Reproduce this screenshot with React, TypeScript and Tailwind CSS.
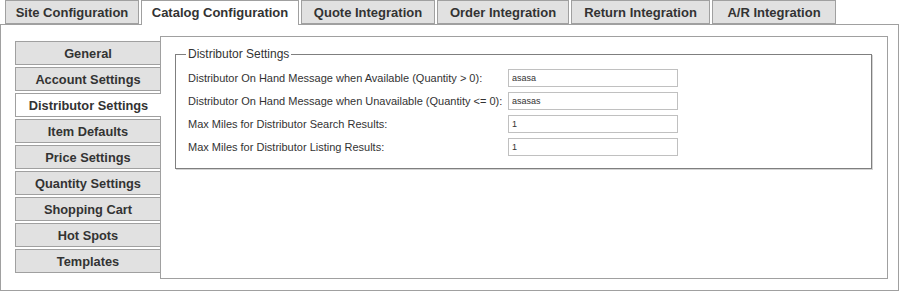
const tabs = [
    { label: 'Site Configuration', w: 'w-[134px]' },
    { label: 'Catalog Configuration', w: 'w-[158px]', active: true },
    { label: 'Quote Integration', w: 'w-[134px]' },
    { label: 'Order Integration', w: 'w-[132px]' },
    { label: 'Return Integration', w: 'w-[139px]' },
    { label: 'A/R Integration', w: 'w-[124px]' },
];

const navItems = [
    'General',
    'Account Settings',
    'Distributor Settings',
    'Item Defaults',
    'Price Settings',
    'Quantity Settings',
    'Shopping Cart',
    'Hot Spots',
    'Templates',
];

const fields = [
    { label: 'Distributor On Hand Message when Available (Quantity > 0):', value: 'asasa' },
    { label: 'Distributor On Hand Message when Unavailable (Quantity <= 0):', value: 'asasas' },
    { label: 'Max Miles for Distributor Search Results:', value: '1' },
    { label: 'Max Miles for Distributor Listing Results:', value: '1' },
];

export default function App() {
    return <div className="w-[899px] h-[291px] bg-white text-[#333] font-['Liberation_Sans',Arial,sans-serif]">
        <div className="relative z-10 flex items-start gap-[2px] pl-[5px] h-[25px]">
            {tabs.map(tab => (
                <div
                    key={tab.label}
                    className={tab.active
                        ? `${tab.w} h-[25px] pb-px flex items-center justify-center border border-b-0 border-[#a0a0a0] bg-white text-[13px] font-bold`
                        : `${tab.w} h-[24px] pt-px flex items-center justify-center border border-[#a0a0a0] bg-[#e1e1e1] text-[13px] font-bold`}
                >
                    {tab.label}
                </div>
            ))}
        </div>

        <div className="-mt-px h-[267px] border border-[#a0a0a0] pl-[14px] pt-[11px] flex items-start">
            <div className="relative z-10 w-[145px] pt-[5px] flex flex-col gap-[2px]">
                {navItems.map(item => (
                    <div
                        key={item}
                        className={item === 'Distributor Settings'
                            ? 'w-[146px] h-[24px] pt-px flex items-center justify-center border border-r-0 border-[#a0a0a0] bg-white text-[12.8px] font-bold'
                            : 'w-[146px] h-[24px] pt-px flex items-center justify-center border border-[#a0a0a0] bg-[#e1e1e1] text-[12.8px] font-bold'}
                    >
                        {item}
                    </div>
                ))}
            </div>

            <div className="w-[728px] h-[243px] border border-[#a0a0a0] pl-[14px] pt-[17px]">
                <div className="relative w-[697px] border border-[#7f7f7f] shadow-[1px_1px_0_#d4d4d4] pl-[12px] pt-[14px] pb-[12px] flex flex-col gap-[5px]">
                    <span className="absolute left-[10px] top-[-8px] px-[2px] bg-white text-[12px] leading-[14px]">
                        Distributor Settings
                    </span>
                    {fields.map(field => (
                        <div key={field.label} className="flex items-center h-[18px]">
                            <label className="w-[320px] text-[11px] leading-[13px] whitespace-nowrap">{field.label}</label>
                            <input
                                readOnly
                                value={field.value}
                                className="w-[170px] h-[18px] border border-[#c0c0c0] px-[3px] text-[9px] text-[#333] outline-none"
                            />
                        </div>
                    ))}
                </div>
            </div>
        </div>
    </div>;
}
